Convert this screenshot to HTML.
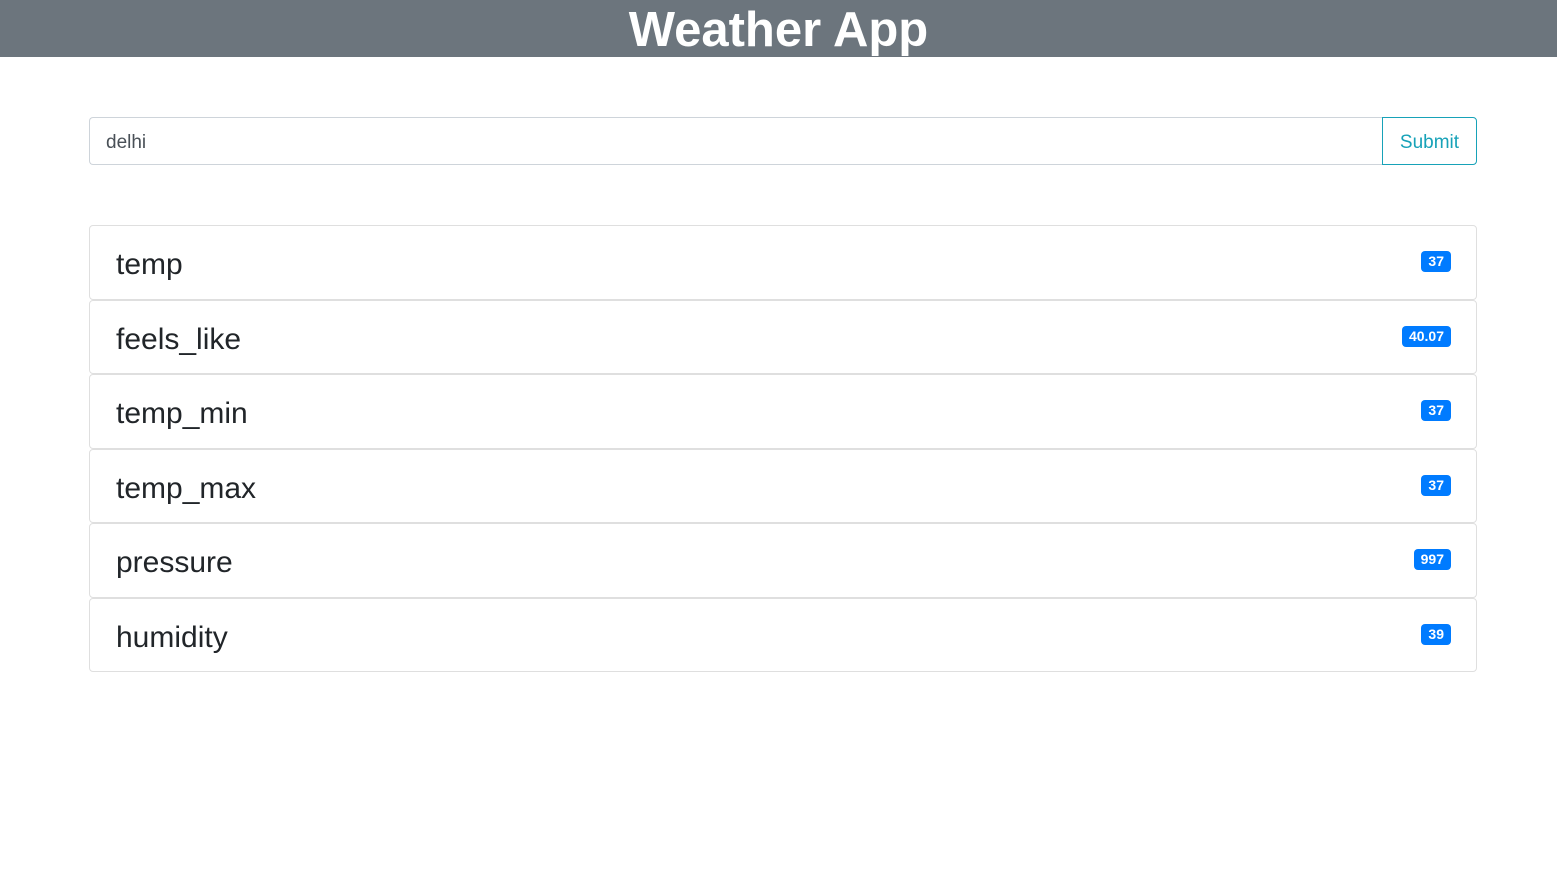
<!DOCTYPE html>
<html><head><style>
body{margin:0;font-family:"Liberation Sans",sans-serif;background:#fff;width:1557px;height:873px;overflow:hidden}
.hd{background:#6c757d;height:57px;color:#fff;text-align:center;font-weight:bold;font-size:49px;line-height:60px;letter-spacing:0px;overflow:hidden}
.form{position:absolute;left:89px;top:117px;width:1388px;height:48px;display:flex}
.inp{flex:1;border:1px solid #ced4da;border-right:none;border-radius:4px 0 0 4px;font-size:19px;color:#495057;padding-left:16px;line-height:50px}
.btn{width:93px;border:1px solid #17a2b8;border-radius:0 4px 4px 0;color:#17a2b8;font-size:19px;text-align:center;line-height:50px}
.list{position:absolute;left:89px;top:225px;width:1388px}
.it{box-sizing:border-box;height:74.5px;border:1px solid #dfdfdf;border-radius:4px;position:relative;font-size:30px;color:#212529;padding-left:26px;line-height:78px;margin-bottom:0}
.b{position:absolute;right:25px;top:25px;background:#007bff;color:#fff;font-size:14px;font-weight:bold;border-radius:4px;padding:0 7px;line-height:21px}
</style></head><body>
<div class="hd">Weather App</div>
<div class="form"><div class="inp">delhi</div><div class="btn">Submit</div></div>
<div class="list">
<div class="it">temp<span class="b">37</span></div>
<div class="it">feels_like<span class="b">40.07</span></div>
<div class="it">temp_min<span class="b">37</span></div>
<div class="it">temp_max<span class="b">37</span></div>
<div class="it">pressure<span class="b">997</span></div>
<div class="it">humidity<span class="b">39</span></div>
</div>
</body></html>
